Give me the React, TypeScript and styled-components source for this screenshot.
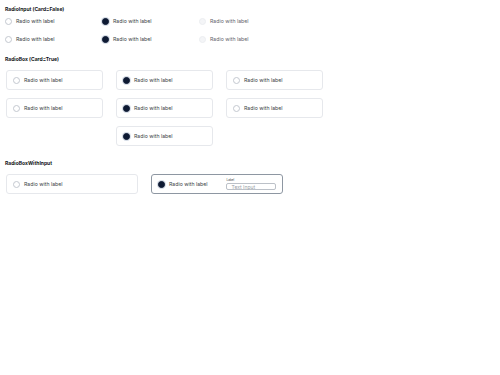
import styled, { createGlobalStyle } from 'styled-components';

const GlobalStyle = createGlobalStyle`
  html, body {
    margin: 0;
    padding: 0;
    background: #ffffff;
  }
  body {
    font-family: Inter, "Liberation Sans", Arial, sans-serif;
    color: #2b2f36;
  }
`;

const Page = styled.div`
  padding: 6px 5px 0 5px;
  display: flex;
  flex-direction: column;
`;

const Section = styled.section<{ $top: number }>`
  margin-top: ${({ $top }) => $top}px;
  display: flex;
  flex-direction: column;
`;

const SectionTitle = styled.h3`
  margin: 0;
  font-size: 5px;
  line-height: 6px;
  font-weight: 700;
  color: #111418;
  white-space: nowrap;
`;

const RadioGrid = styled.div`
  margin-top: 4px;
  display: grid;
  grid-template-columns: repeat(3, 97px);
  row-gap: 8px;
`;

const CardGrid = styled.div<{ $col: number }>`
  margin-top: 8px;
  margin-left: 1px;
  display: grid;
  grid-template-columns: repeat(3, ${({ $col }) => $col}px);
  column-gap: 13px;
  row-gap: 8px;
`;

const RadioRow = styled.label<{ $disabled?: boolean }>`
  display: flex;
  align-items: center;
  gap: 4px;
  height: 10px;
  font-size: 5.2px;
  white-space: nowrap;
  color: ${({ $disabled }) => ($disabled ? '#5f646c' : '#3a3f46')};
`;

const Circle = styled.span<{ $checked?: boolean; $disabled?: boolean }>`
  box-sizing: border-box;
  width: 7px;
  height: 7px;
  border-radius: 50%;
  flex-shrink: 0;
  border: 1px solid
    ${({ $checked, $disabled }) => ($disabled ? '#eceef1' : $checked ? '#0e1a33' : '#c3c8cf')};
  background: ${({ $checked, $disabled }) =>
    $disabled ? '#f4f5f7' : $checked ? '#0e1a33' : '#ffffff'};
  box-shadow: ${({ $checked }) => ($checked ? '0 0 0 1px #d5dce6' : 'none')};
`;

const Card = styled.div<{ $active?: boolean; $col?: number }>`
  box-sizing: border-box;
  height: 20px;
  padding: 0 6px;
  display: flex;
  align-items: center;
  border: 1px solid ${({ $active }) => ($active ? '#8e97a2' : '#e6e8ec')};
  border-radius: 3px;
  background: #ffffff;
  grid-column: ${({ $col }) => ($col ? $col : 'auto')};
`;

const InputGroup = styled.div`
  margin-left: 18px;
  display: flex;
  flex-direction: column;
  gap: 0.5px;
  margin-top: 1px;
`;

const InputLabel = styled.span`
  font-size: 3px;
  line-height: 3px;
  color: #3a3f46;
  padding-left: 1px;
`;

const TextInput = styled.div`
  box-sizing: border-box;
  width: 50px;
  height: 7px;
  border: 0.7px solid #bcc1c8;
  border-radius: 2px;
  font-size: 5px;
  line-height: 6px;
  padding-left: 5px;
  color: #9aa0a8;
  white-space: nowrap;
`;

function Radio({ checked, disabled }: { checked?: boolean; disabled?: boolean }) {
  return (
    <RadioRow $disabled={disabled}>
      <Circle $checked={checked} $disabled={disabled} />
      Radio with label
    </RadioRow>
  );
}

export default function App() {
  return (
    <>
      <GlobalStyle />
      <Page>
        <Section $top={0}>
          <SectionTitle>RadioInput (Card=False)</SectionTitle>
          <RadioGrid>
            <Radio />
            <Radio checked />
            <Radio disabled />
            <Radio />
            <Radio checked />
            <Radio disabled />
          </RadioGrid>
        </Section>

        <Section $top={12}>
          <SectionTitle>RadioBox (Card=True)</SectionTitle>
          <CardGrid $col={97}>
            <Card><Radio /></Card>
            <Card><Radio checked /></Card>
            <Card><Radio /></Card>
            <Card><Radio /></Card>
            <Card><Radio checked /></Card>
            <Card><Radio /></Card>
            <Card $col={2}><Radio checked /></Card>
          </CardGrid>
        </Section>

        <Section $top={14}>
          <SectionTitle>RadioBoxWithInput</SectionTitle>
          <CardGrid $col={132}>
            <Card><Radio /></Card>
            <Card $active>
              <Radio checked />
              <InputGroup>
                <InputLabel>Label</InputLabel>
                <TextInput>Text Input</TextInput>
              </InputGroup>
            </Card>
          </CardGrid>
        </Section>
      </Page>
    </>
  );
}
